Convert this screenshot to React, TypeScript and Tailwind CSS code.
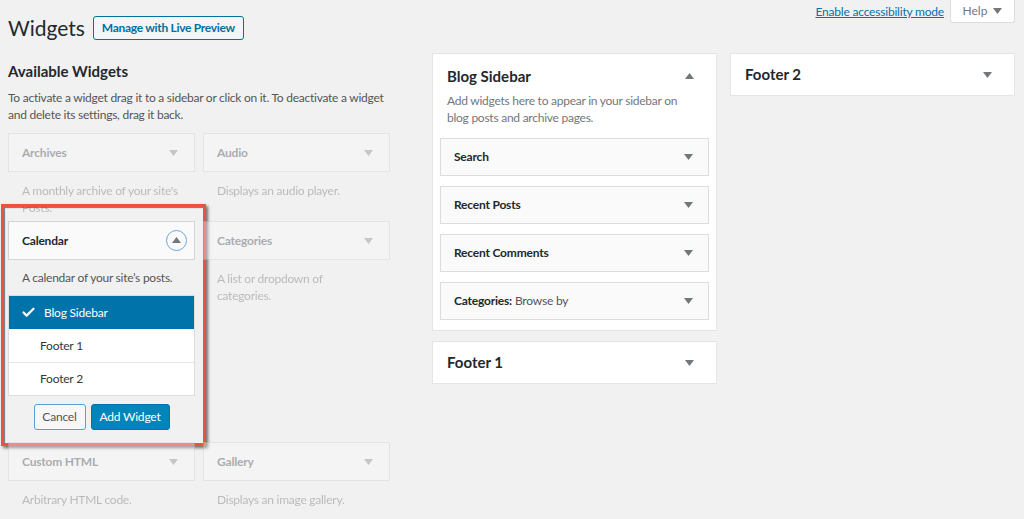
import { Check } from "lucide-react"

// Faded list of available widgets (the chooser is open on Calendar).
const rows = [
  [
    { title: "Archives", desc: "A monthly archive of your site's Posts." },
    { title: "Audio", desc: "Displays an audio player." },
  ],
  [
    { title: "Calendar", desc: "A calendar of your site's posts.", open: true },
    { title: "Categories", desc: "A list or dropdown of categories." },
  ],
  [
    { title: "Custom HTML", desc: "Arbitrary HTML code." },
    { title: "Gallery", desc: "Displays an image gallery." },
  ],
  [
    { title: "Image", desc: "Displays an image." },
    { title: "Meta", desc: "Login, RSS, & WordPress.org links." },
  ],
]

const sidebarWidgets = [
  { title: "Search" },
  { title: "Recent Posts" },
  { title: "Recent Comments" },
  { title: "Categories:", sub: "Browse by" },
]

const font = { fontFamily: 'Lato, "Open Sans", sans-serif' }

function Arrow({ up = false, className = "" }: { up?: boolean; className?: string }) {
  return (
    <svg width="9" height="6" viewBox="0 0 9 6" className={className}>
      {up ? <path d="M0 6 L4.5 0 L9 6 Z" fill="currentColor" /> : <path d="M0 0 L9 0 L4.5 6 Z" fill="currentColor" />}
    </svg>
  )
}

function Chooser() {
  return (
    <div className="relative pb-[12px]">
      {/* annotation frame */}
      <div className="pointer-events-none absolute -top-[17px] -left-[7px] h-[242px] w-[205px] border-[3px] border-[#e9533f] shadow-[2px_2px_3px_rgba(0,0,0,0.55),inset_1px_1px_1px_rgba(0,0,0,0.5)]" />
      <div className="flex h-[39px] items-center justify-between border border-[#d4d4d4] bg-[#fafafa] pr-[7px] pl-[13px]">
        <span className="text-[12px] font-bold tracking-[-0.2px] text-[#23282d]">Calendar</span>
        <span className="flex size-[21px] items-center justify-center rounded-full border border-[#6aa6dd] text-[#72777c]">
          <Arrow up className="-mt-px" />
        </span>
      </div>
      <p className="px-[14px] pt-[9px] pb-[9px] text-[12px] leading-[17px] tracking-[-0.25px] text-[#555]">
        A calendar of your site’s posts.
      </p>
      <ul className="border border-[#ddd] bg-white text-[12px] tracking-[-0.2px]">
        <li className="flex h-[33px] items-center gap-[8px] bg-[#0073aa] pl-[12px] text-white">
          <Check size={15} strokeWidth={3.5} />
          Blog Sidebar
        </li>
        <li className="flex h-[34px] items-center border-b border-[#e5e5e5] pl-[31px] text-[#32373c]">Footer 1</li>
        <li className="flex h-[32px] items-center pl-[31px] text-[#32373c]">Footer 2</li>
      </ul>
      <div className="flex justify-center gap-[5px] pt-[8px]">
        <button className="h-[26px] w-[52px] rounded-[3px] border border-[#5b9dd9] bg-[#f7f7f7] text-[12px] tracking-[-0.2px] text-[#555]">
          Cancel
        </button>
        <button className="h-[26px] w-[79px] rounded-[3px] border border-[#0073aa] bg-[#0085ba] text-[12px] tracking-[-0.2px] text-white">
          Add Widget
        </button>
      </div>
    </div>
  )
}

function AvailableWidget({ w }: { w: { title: string; desc: string; open?: boolean } }) {
  if (w.open) return <Chooser />
  return (
    <div className="opacity-35">
      <div className="flex h-[39px] items-center justify-between border border-[#ccc] bg-[#fafafa] pr-[16px] pl-[13px]">
        <span className="text-[12px] font-bold tracking-[-0.2px] text-[#23282d]">{w.title}</span>
        <Arrow className="text-[#72777c]" />
      </div>
      <p className="h-[49px] overflow-hidden px-[14px] pt-[10px] text-[12px] leading-[17px] tracking-[-0.25px] text-[#555]">
        {w.desc}
      </p>
    </div>
  )
}

export default function App() {
  return (
    <div style={font} className="relative h-[519px] w-[1024px] overflow-hidden bg-[#f1f1f1] text-[#444]">
      {/* screen meta links */}
      <div className="absolute top-0 right-[9px] flex items-start gap-[6px]">
        <a className="pt-[3px] text-[12px] tracking-[-0.2px] text-[#0073aa] underline">Enable accessibility mode</a>
        <button className="flex h-[23px] w-[65px] items-center justify-center gap-[6px] rounded-b-[3px] border border-t-0 border-[#ddd] bg-white text-[12px] text-[#72777c]">
          Help <Arrow className="text-[#72777c]" />
        </button>
      </div>

      <div className="flex items-center gap-[8px] pt-[16px] pl-[8px]">
        <h1 className="text-[21px] leading-[24px] font-normal text-[#23282d]">Widgets</h1>
        <button className="h-[24px] w-[151px] rounded-[3px] border border-[#0071a1] bg-[#f3f5f6] text-[12px] font-bold tracking-[-0.3px] text-[#0071a1]">
          Manage with Live Preview
        </button>
      </div>

      <div className="flex gap-[42px] pl-[8px]">
        {/* available widgets */}
        <div className="w-[382px] shrink-0">
          <h2 className="pt-[21px] text-[15px] leading-[20px] font-bold text-[#23282d]">Available Widgets</h2>
          <p className="pt-[8px] text-[12px] leading-[17px] tracking-[-0.25px] text-[#555]">
            To activate a widget drag it to a sidebar or click on it. To deactivate a widget and delete its settings, drag it back.
          </p>
          <div className="mt-[10px] grid grid-cols-2 gap-x-[8px]">
            {rows.flat().map((w) => (
              <AvailableWidget key={w.title} w={w} />
            ))}
          </div>
        </div>

        {/* sidebars */}
        <div className="mt-[13px] flex gap-[13px]">
          <div className="flex w-[285px] flex-col gap-[10px]">
            <div className="border border-[#e5e5e5] bg-white px-[7px] pb-[10px]">
              <div className="flex items-center justify-between pt-[12px] pr-[15px] pl-[7px]">
                <h3 className="text-[15px] leading-[20px] font-bold text-[#23282d]">Blog Sidebar</h3>
                <Arrow up className="text-[#72777c]" />
              </div>
              <p className="pt-[6px] pr-[30px] pl-[7px] text-[12px] leading-[17px] tracking-[-0.25px] text-[#72777c]">
                Add widgets here to appear in your sidebar on blog posts and archive pages.
              </p>
              <div className="mt-[12px] flex flex-col gap-[10px]">
                {sidebarWidgets.map((w) => (
                  <div
                    key={w.title}
                    className="flex h-[38px] items-center justify-between border border-[#ddd] bg-[#fafafa] pr-[15px] pl-[13px]"
                  >
                    <span className="text-[12px] font-bold tracking-[-0.2px] text-[#23282d]">
                      {w.title}
                      {w.sub && <span className="font-normal text-[#555]"> {w.sub}</span>}
                    </span>
                    <Arrow className="text-[#72777c]" />
                  </div>
                ))}
              </div>
            </div>
            <div className="flex h-[43px] items-center justify-between border border-[#e5e5e5] bg-white pr-[22px] pl-[14px]">
              <h3 className="text-[15px] font-bold text-[#23282d]">Footer 1</h3>
              <Arrow className="text-[#72777c]" />
            </div>
          </div>
          <div className="w-[285px]">
            <div className="flex h-[43px] items-center justify-between border border-[#e5e5e5] bg-white pr-[22px] pl-[14px]">
              <h3 className="text-[15px] font-bold text-[#23282d]">Footer 2</h3>
              <Arrow className="text-[#72777c]" />
            </div>
          </div>
        </div>
      </div>
    </div>
  )
}
